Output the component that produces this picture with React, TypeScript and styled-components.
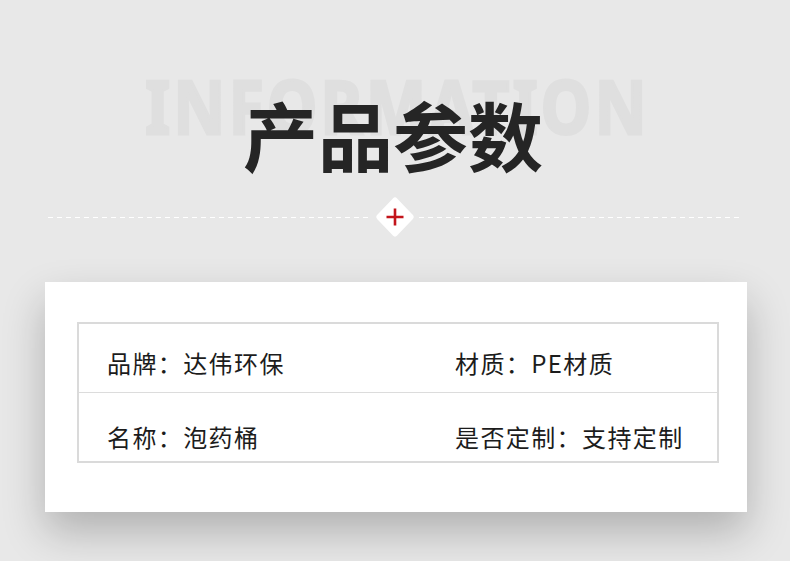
import React from "react";
import styled, { createGlobalStyle } from "styled-components";

const GlobalStyle = createGlobalStyle`
  html, body {
    margin: 0;
    padding: 0;
    background: #e8e8e8;
  }
  body {
    font-family: "Noto Sans CJK SC", "Noto Sans", sans-serif;
  }
`;

const specs = [
  {
    offset: 25,
    cells: [
      { label: "品牌", value: "达伟环保" },
      { label: "材质", value: "PE材质" },
    ],
  },
  {
    offset: 30,
    cells: [
      { label: "名称", value: "泡药桶" },
      { label: "是否定制", value: "支持定制" },
    ],
  },
];

function App() {
  return (
    <Page>
      <GlobalStyle />
      <Header>
        <Watermark>INFORMATION</Watermark>
        <Title>产品参数</Title>
      </Header>
      <Divider>
        <Dashes />
        <Diamond>
          <svg width="18" height="18" viewBox="0 0 18 18">
            <path d="M9 0.5V17.5M0.5 9H17.5" stroke="#c3141b" strokeWidth="2.6" />
          </svg>
        </Diamond>
        <Dashes />
      </Divider>
      <Card>
        <Table>
          {specs.map((row, i) => (
            <Row key={i} $last={i === specs.length - 1} $offset={row.offset}>
              {row.cells.map((cell) => (
                <Cell key={cell.label}>
                  {cell.label}：{cell.value}
                </Cell>
              ))}
            </Row>
          ))}
        </Table>
      </Card>
    </Page>
  );
}

export default App;

const Page = styled.div`
  width: 790px;
  height: 561px;
  overflow: hidden;
  background: #e8e8e8;
  padding-top: 68px;
  box-sizing: border-box;
`;

const Header = styled.div`
  position: relative;
  height: 118px;
  display: flex;
  justify-content: center;
`;

const Watermark = styled.div`
  position: absolute;
  top: -1px;
  left: 0;
  right: 0;
  text-align: center;
  font-family: "Noto Sans", "Liberation Sans", sans-serif;
  font-weight: 700;
  font-size: 74px;
  line-height: 77px;
  letter-spacing: 4px;
  color: #dfdfdf;
  -webkit-text-stroke: 3px #dfdfdf;
  transform: scaleX(0.86);
  padding-left: 6px;
`;

const Title = styled.h1`
  position: relative;
  margin: 0;
  padding-top: 26px;
  font-family: "Noto Sans CJK SC", sans-serif;
  font-weight: 700;
  font-size: 75px;
  line-height: 80px;
  color: #252525;
  letter-spacing: 0px;
  margin-right: 4px;
`;

const Divider = styled.div`
  display: flex;
  align-items: center;
  margin: 10px 48px 0;
  height: 42px;
  gap: 4px;
`;

const Dashes = styled.div`
  flex: 1;
  height: 1px;
  background-image: linear-gradient(to right, #ffffff 0 5px, transparent 5px 9px);
  background-size: 9px 1px;
  background-repeat: repeat-x;
`;

const Diamond = styled.div`
  position: relative;
  width: 40px;
  height: 42px;
  display: flex;
  align-items: center;
  justify-content: center;
  &::before {
    content: "";
    position: absolute;
    left: 6px;
    top: 7px;
    width: 28px;
    height: 28px;
    background: #ffffff;
    border-radius: 3px;
    transform: scaleY(1.05) rotate(45deg);
  }
  svg {
    position: relative;
  }
`;

const Card = styled.div`
  margin: 44px 0 0 45px;
  width: 702px;
  height: 230px;
  box-sizing: border-box;
  background: #ffffff;
  padding: 40px 28px 0 32px;
  box-shadow: 0 20px 40px rgba(0, 0, 0, 0.24);
`;

const Table = styled.div`
  border: 2px solid #dadada;
`;

const Row = styled.div<{ $last: boolean; $offset: number }>`
  display: grid;
  grid-template-columns: 348px 1fr;
  height: ${(p) => (p.$last ? "68px" : "69px")};
  border-bottom: ${(p) => (p.$last ? "none" : "1px solid #dcdcdc")};
  box-sizing: border-box;
  padding-top: ${(p) => p.$offset}px;
`;

const Cell = styled.div`
  padding-left: 28px;
  font-size: 24px;
  line-height: 28px;
  letter-spacing: 1.4px;
  color: #1c1c1c;
`;
